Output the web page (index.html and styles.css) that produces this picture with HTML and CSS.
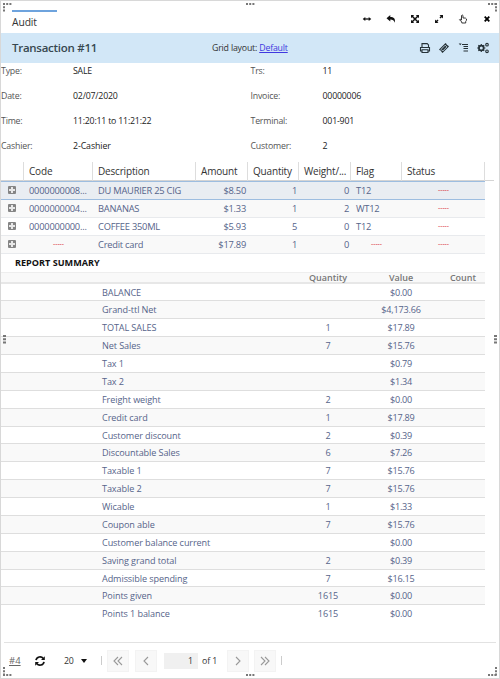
FILE: index.html
```html
<!DOCTYPE html>
<html lang="en">
<head>
<meta charset="utf-8">
<title>Audit</title>
<link rel="stylesheet" href="styles.css">
</head>
<body>
<main class="window">
  <header class="titlebar">
    <div class="tab">Audit</div>
    <div class="window-actions">
      <svg class="icon" viewBox="0 0 12 12"><path d="M3 6h6" stroke="#111" stroke-width="1.3"/><path d="M1.7 6l2.6-2v4zM10.3 6L7.7 4v4z"/></svg>
      <svg class="icon" viewBox="0 0 12 12"><path d="M1.5 5.2L5.3 2v2C8.7 4 10.6 5.600 9.800 9.800 9 7.200 7.800 6.500 5.300 6.500v2z"/></svg>
      <svg class="icon" viewBox="0 0 12 12"><path d="M3 3l6 6M9 3l-6 6" stroke="#111" stroke-width="1.500"/><path d="M2 2h3.200L2 5.200zM10 2v3.200L6.800 2zM2 10V6.800L5.200 10zM10 10H6.800L10 6.800z"/></svg>
      <svg class="icon" viewBox="0 0 12 12"><path d="M7 5l2-2M5 7L3 9" stroke="#111" stroke-width="1.500"/><path d="M6.500 2H10v3.500zM2 6.500L5.500 10H2z"/></svg>
      <svg class="icon" viewBox="0 0 12 12"><path class="line" d="M4.500 7V2.500q.8-1 1.500 0V5q3-.4 3.500 1 .2 1.500-.8 2.500v1.500H4.800V9L2.500 6.700q.3-1.200 2 .3"/></svg>
      <svg class="icon" viewBox="0 0 12 12"><path d="M3.700 3.700l4.600 4.600M8.300 3.700L3.700 8.300" stroke="#000" stroke-width="1.800"/></svg>
    </div>
  </header>

  <section class="heading">
    <h1>Transaction #11</h1>
    <p class="layout-name">Grid layout: <a href="#">Default</a></p>
    <div class="tools">
      <svg class="tool" viewBox="0 0 12 12"><path class="bold" d="M3 5V1.600h5.200L9.500 3v2M3 7.700h6v2.800H3z"/><path class="bold" d="M3 9H1.500V5.500h9V9H9"/></svg>
      <svg class="tool" viewBox="0 0 12 12"><path d="M7.500 1l1.100 1.100q-.2 1.200 1.200 1.200L11 4.500 4.500 11 3.300 9.800q.2-1.400-1.200-1.200L1 7.500z"/><path class="light" d="M7.200 3.200l1.700 1.700-4.100 4.100-1.700-1.700z"/></svg>
      <svg class="tool" viewBox="0 0 12 12"><path class="bold" d="M4 2.500h6M5.500 4.500H10M5.500 6.500H10M5.500 9H10"/><path d="M.7 1.500h3L2.200 3.300z"/></svg>
      <svg class="tool" viewBox="0 0 12 12"><circle class="gear" cx="4.300" cy="6" r="2.400"/><path class="bold" d="M4.300 1.900v1.200M4.300 8.900v1.200M.2 6h1.200M7.200 6h1.200M1.400 3.100l.9.900M6.300 8l.9.900M7.200 3.100l-.9.900M2.300 8l-.9.900"/><circle class="bold" cx="10" cy="2.700" r="1.300"/><circle class="bold" cx="10" cy="9.300" r="1.300"/></svg>
    </div>
  </section>

  <dl class="details">
    <dt>Type:</dt><dd>SALE</dd><dt>Trs:</dt><dd>11</dd>
    <dt>Date:</dt><dd>02/07/2020</dd><dt>Invoice:</dt><dd>00000006</dd>
    <dt>Time:</dt><dd>11:20:11 to 11:21:22</dd><dt>Terminal:</dt><dd>001-901</dd>
    <dt>Cashier:</dt><dd class="name">2-Cashier</dd><dt>Customer:</dt><dd>2</dd>
  </dl>

  <section class="items">
    <div class="items-head">
      <span></span><span>Code</span><span>Description</span><span>Amount</span><span>Quantity</span><span>Weight/...</span><span>Flag</span><span>Status</span>
    </div>
    <div class="item selected"><i class="expand"></i><span>0000000008...</span><span>DU MAURIER 25 CIG</span><span class="num">$8.50</span><span class="num">1</span><span class="num">0</span><span>T12</span><span class="none">-----</span></div>
    <div class="item alt"><i class="expand"></i><span>0000000004...</span><span>BANANAS</span><span class="num">$1.33</span><span class="num">1</span><span class="num">2</span><span>WT12</span><span class="none">-----</span></div>
    <div class="item"><i class="expand"></i><span>0000000000...</span><span>COFFEE 350ML</span><span class="num">$5.93</span><span class="num">5</span><span class="num">0</span><span>T12</span><span class="none">-----</span></div>
    <div class="item alt"><i class="expand"></i><span class="none">-----</span><span>Credit card</span><span class="num">$17.89</span><span class="num">1</span><span class="num">0</span><span class="none">-----</span><span class="none">-----</span></div>
  </section>

  <section class="summary">
    <h2>REPORT SUMMARY</h2>
    <div class="sum-head"><span></span><span>Quantity</span><span>Value</span><span>Count</span></div>
    <div class="sum-row"><span>BALANCE</span><span></span><span>$0.00</span></div>
    <div class="sum-row"><span>Grand-ttl Net</span><span></span><span>$4,173.66</span></div>
    <div class="sum-row"><span>TOTAL SALES</span><span>1</span><span>$17.89</span></div>
    <div class="sum-row"><span>Net Sales</span><span>7</span><span>$15.76</span></div>
    <div class="sum-row"><span>Tax 1</span><span></span><span>$0.79</span></div>
    <div class="sum-row"><span>Tax 2</span><span></span><span>$1.34</span></div>
    <div class="sum-row"><span>Freight weight</span><span>2</span><span>$0.00</span></div>
    <div class="sum-row"><span>Credit card</span><span>1</span><span>$17.89</span></div>
    <div class="sum-row"><span>Customer discount</span><span>2</span><span>$0.39</span></div>
    <div class="sum-row"><span>Discountable Sales</span><span>6</span><span>$7.26</span></div>
    <div class="sum-row"><span>Taxable 1</span><span>7</span><span>$15.76</span></div>
    <div class="sum-row"><span>Taxable 2</span><span>7</span><span>$15.76</span></div>
    <div class="sum-row"><span>Wicable</span><span>1</span><span>$1.33</span></div>
    <div class="sum-row"><span>Coupon able</span><span>7</span><span>$15.76</span></div>
    <div class="sum-row"><span>Customer balance current</span><span></span><span>$0.00</span></div>
    <div class="sum-row"><span>Saving grand total</span><span>2</span><span>$0.39</span></div>
    <div class="sum-row"><span>Admissible spending</span><span>7</span><span>$16.15</span></div>
    <div class="sum-row"><span>Points given</span><span>1615</span><span>$0.00</span></div>
    <div class="sum-row"><span>Points 1 balance</span><span>1615</span><span>$0.00</span></div>
  </section>

  <footer class="pager">
    <span class="count">#4</span>
    <svg class="refresh" viewBox="0 0 12 12"><path d="M2 5.200A4.100 4.100 0 0 1 9.300 3.500M10 6.800A4.100 4.100 0 0 1 2.700 8.500"/><path class="fill" d="M10.800 1.200V5H7zM1.200 10.800V7H5z"/></svg>
    <span class="size">20</span><i class="caret"></i>
    <i class="sep"></i>
    <span class="btn first"><svg viewBox="0 0 10 10"><path d="M5 1L1 5l4 4M9 1L5 5l4 4"/></svg></span>
    <span class="btn prev"><svg viewBox="0 0 10 10"><path d="M7 1L3 5l4 4"/></svg></span>
    <span class="page">1</span>
    <span class="of">of 1</span>
    <span class="btn next"><svg viewBox="0 0 10 10"><path d="M3 1l4 4-4 4"/></svg></span>
    <span class="btn last"><svg viewBox="0 0 10 10"><path d="M1 1l4 4-4 4M5 1l4 4-4 4"/></svg></span>
    <i class="sep end"></i>
  </footer>

  <svg class="grip tl" viewBox="0 0 9 9"><path d="M0 1h9M1 0v9"/></svg>
  <svg class="grip tr" viewBox="0 0 9 9"><path d="M0 1h9M8 0v9"/></svg>
  <svg class="grip bl" viewBox="0 0 9 9"><path d="M0 8h9M1 0v9"/></svg>
  <svg class="grip br" viewBox="0 0 9 9"><path d="M0 8h9M8 0v9"/></svg>
  <svg class="grip tc" viewBox="0 0 9 9"><path d="M0 1h9"/></svg>
  <svg class="grip bc" viewBox="0 0 9 9"><path d="M0 8h9"/></svg>
  <svg class="grip ml" viewBox="0 0 9 9"><path class="wide" d="M1.500 0v9"/></svg>
  <svg class="grip mr" viewBox="0 0 9 9"><path class="wide" d="M7.500 0v9"/></svg>
</main>
</body>
</html>
```
FILE: styles.css
```css
* { box-sizing: border-box; }
body { margin: 0; background: #fff; font: 9.300px/18px "Open Sans", sans-serif; color: #333; }
h1, h2, p, dl, dd { margin: 0; }
.window { position: relative; width: 500px; height: 679px; border: 1px solid #d8d8d8; overflow: hidden; white-space: nowrap; }

.titlebar { display: flex; justify-content: space-between; height: 32px; padding: 9px 6px 0 11px; }
.tab { width: 45px; height: 23px; border-top: 2px solid #6ea3dd; font-size: 10.300px; font-weight: 500; letter-spacing: -.1px; line-height: 21px; }
.window-actions { display: flex; gap: 12px; padding-top: 3px; }
.icon { width: 12px; height: 12px; fill: #111; }
.line { fill: none; stroke: #222; stroke-width: .9; }

.heading { display: flex; align-items: center; height: 30px; padding: 0 10px 0 11px; background: #d2e7f7; }
.heading h1 { width: 200px; font-size: 11.500px; font-weight: 600; letter-spacing: -.27px; color: #37474f; }
.layout-name { flex: 1; font-size: 8.800px; letter-spacing: -.2px; }
.layout-name a { color: #4038e0; }
.tools { display: flex; gap: 7.500px; }
.tool { width: 12px; height: 12px; fill: #263238; }
.bold { fill: none; stroke: #263238; stroke-width: 1.100; }
.light { fill: none; stroke: #d2e7f7; stroke-width: .8; }
.gear { fill: none; stroke: #263238; stroke-width: 1.800; }

.details { display: grid; grid-template-columns: 72px 177.500px 72px 1fr; grid-auto-rows: 25px; height: 99px; font-size: 8.800px; letter-spacing: -.21px; line-height: 17px; }
.details dt { color: #555; }
.details dd { color: #222; }
.details .name { font-weight: 500; letter-spacing: -.1px; }

.items-head, .item { display: grid; grid-template-columns: 23px 69px 103px 52px 51px 52px 51px 83px; width: 484px; }
.items-head { width: 493px; height: 19px; border-bottom: 1px solid #d4d4d4; font-size: 10px; letter-spacing: -.18px; line-height: 19px; }
.items-head span { padding-left: 5px; border-right: 1px solid #ddd; }
.item { height: 18px; border-bottom: 1px solid #e8eaed; color: #56648a; letter-spacing: -.22px; line-height: 17px; }
.item span { padding-left: 5px; }
.item .num { padding: 0 2px 0 0; text-align: right; }
.item .none { padding: 0; color: #d8201c; font-size: 6.800px; font-weight: 500; letter-spacing: 0; line-height: 15px; text-align: center; }
.alt { background: #f9f9f9; }
.item.selected { height: 19px; background: #e9edf2; border-top: 1px solid #9dbde0; border-bottom-color: #9dbde0; }
.expand { width: 8px; height: 8px; margin: 4px 0 0 7px; border-radius: 1px; background: linear-gradient(#e8e8e8, #e8e8e8) center / 6px 2px no-repeat, linear-gradient(#e8e8e8, #e8e8e8) center / 2px 6px no-repeat, #858585; }

.summary { width: 484px; height: 388px; }
.summary h2 { height: 17.600px; padding-left: 14px; font-size: 9.100px; font-weight: 700; line-height: 18px; color: #111; }
.sum-head, .sum-row { display: grid; text-align: center; }
.sum-head { grid-template-columns: 291px 72px 74px 50px; height: 12px; background: #f9f9f9; border-top: 1px solid #eee; border-bottom: 2px solid #e7e7e7; font-size: 9px; font-weight: 600; line-height: 9px; color: #777; }
.sum-row { grid-template-columns: 291px 72px 74px; height: 17.890px; border-bottom: 1px solid #dedede; color: #56648a; font-size: 9.100px; letter-spacing: -.1px; line-height: 17px; }
.sum-row span:first-child { padding-left: 101px; text-align: left; }
.sum-row span:nth-child(3) { letter-spacing: -.2px; }
.sum-row:nth-child(even) { background: #f9f9f9; }
.sum-row:nth-child(odd) { background: #fff; }
.sum-row:last-child { background: #fff; border: 0; }

.pager { display: flex; align-items: center; height: 36px; margin: 0 3px; padding-left: 5px; border-top: 1px solid #e2e2e2; font-size: 8.800px; }
.count { width: 25px; color: #666; text-decoration: underline; font-size: 9.500px; }
.refresh { width: 12px; height: 12px; fill: none; stroke: #111; stroke-width: 1.700; }
.refresh .fill { fill: #111; stroke: none; }
.size { width: 10px; margin-left: 18px; letter-spacing: -.2px; }
.caret { width: 6px; margin-left: 7px; border: 3px solid transparent; border-top: 4px solid #111; border-bottom: 0; }
.sep { width: 1px; height: 9px; margin: 0 5px 0 14px; background: #ccc; }
.btn { display: grid; place-items: center; width: 22px; height: 22px; background: #f8f8f8; border: 1px solid #f3f3f3; }
.btn svg { width: 10px; height: 10px; fill: none; stroke: #999; stroke-width: 1.100; }
.prev { margin-left: 6px; }
.page { width: 34px; height: 16px; margin-left: 7px; padding-right: 5px; background: #f0f0f0; line-height: 16px; text-align: right; }
.of { width: 24px; padding-left: 4px; letter-spacing: -.1px; }
.next { margin-left: 5px; }
.last { margin-left: 5px; }
.sep.end { margin: 0 0 0 5px; }

.grip { position: absolute; width: 9px; height: 9px; fill: none; stroke: #777; stroke-width: 2; stroke-dasharray: 2 1.200; }
.wide { stroke-width: 3; }
.tl { left: 2px; top: 2px; }
.tr { right: 2px; top: 2px; }
.bl { left: 2px; bottom: 2px; }
.br { right: 2px; bottom: 2px; }
.tc { left: 245px; top: 2px; }
.bc { left: 245px; bottom: 2px; }
.ml { left: 2px; top: 334px; }
.mr { right: 2px; top: 334px; }
```
